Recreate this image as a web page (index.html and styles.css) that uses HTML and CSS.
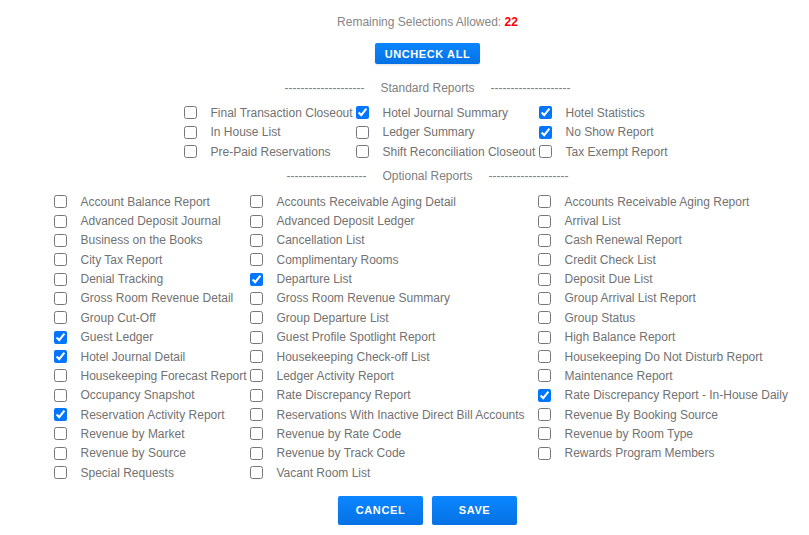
FILE: index.html
```html
<!DOCTYPE html>
<html lang="en">
<head>
    <meta charset="UTF-8">
    <meta name="viewport" content="width=device-width, initial-scale=1.0">
    <title>Report Selection</title>

    <link rel="stylesheet" href="styles.css">
</head>
<body>
    <div class="page">
        <p class="remaining">Remaining Selections Allowed: <b>22</b></p>

        <button type="button" class="btn btn-small">Uncheck All</button>

        <div class="section-title">
            <span>--------------------</span> <span>Standard Reports</span> <span>--------------------</span>
        </div>
        <div class="report-grid standard">
            <label class="item"><input type="checkbox"> Final Transaction Closeout</label>
            <label class="item"><input type="checkbox" checked> Hotel Journal Summary</label>
            <label class="item"><input type="checkbox" checked> Hotel Statistics</label>

            <label class="item"><input type="checkbox"> In House List</label>
            <label class="item"><input type="checkbox"> Ledger Summary</label>
            <label class="item"><input type="checkbox" checked> No Show Report</label>

            <label class="item"><input type="checkbox"> Pre-Paid Reservations</label>
            <label class="item"><input type="checkbox"> Shift Reconciliation Closeout</label>
            <label class="item"><input type="checkbox"> Tax Exempt Report</label>
        </div>

        <div class="section-title second">
            <span>--------------------</span> <span>Optional Reports</span> <span>--------------------</span>
        </div>
        <div class="report-grid optional">
            <label class="item"><input type="checkbox"> Account Balance Report</label>
            <label class="item"><input type="checkbox"> Accounts Receivable Aging Detail</label>
            <label class="item"><input type="checkbox"> Accounts Receivable Aging Report</label>

            <label class="item"><input type="checkbox"> Advanced Deposit Journal</label>
            <label class="item"><input type="checkbox"> Advanced Deposit Ledger</label>
            <label class="item"><input type="checkbox"> Arrival List</label>

            <label class="item"><input type="checkbox"> Business on the Books</label>
            <label class="item"><input type="checkbox"> Cancellation List</label>
            <label class="item"><input type="checkbox"> Cash Renewal Report</label>

            <label class="item"><input type="checkbox"> City Tax Report</label>
            <label class="item"><input type="checkbox"> Complimentary Rooms</label>
            <label class="item"><input type="checkbox"> Credit Check List</label>

            <label class="item"><input type="checkbox"> Denial Tracking</label>
            <label class="item"><input type="checkbox" checked> Departure List</label>
            <label class="item"><input type="checkbox"> Deposit Due List</label>

            <label class="item"><input type="checkbox"> Gross Room Revenue Detail</label>
            <label class="item"><input type="checkbox"> Gross Room Revenue Summary</label>
            <label class="item"><input type="checkbox"> Group Arrival List Report</label>

            <label class="item"><input type="checkbox"> Group Cut-Off</label>
            <label class="item"><input type="checkbox"> Group Departure List</label>
            <label class="item"><input type="checkbox"> Group Status</label>

            <label class="item"><input type="checkbox" checked> Guest Ledger</label>
            <label class="item"><input type="checkbox"> Guest Profile Spotlight Report</label>
            <label class="item"><input type="checkbox"> High Balance Report</label>

            <label class="item"><input type="checkbox" checked> Hotel Journal Detail</label>
            <label class="item"><input type="checkbox"> Housekeeping Check-off List</label>
            <label class="item"><input type="checkbox"> Housekeeping Do Not Disturb Report</label>

            <label class="item"><input type="checkbox"> Housekeeping Forecast Report</label>
            <label class="item"><input type="checkbox"> Ledger Activity Report</label>
            <label class="item"><input type="checkbox"> Maintenance Report</label>

            <label class="item"><input type="checkbox"> Occupancy Snapshot</label>
            <label class="item"><input type="checkbox"> Rate Discrepancy Report</label>
            <label class="item"><input type="checkbox" checked> Rate Discrepancy Report - In-House Daily</label>

            <label class="item"><input type="checkbox" checked> Reservation Activity Report</label>
            <label class="item"><input type="checkbox"> Reservations With Inactive Direct Bill Accounts</label>
            <label class="item"><input type="checkbox"> Revenue By Booking Source</label>

            <label class="item"><input type="checkbox"> Revenue by Market</label>
            <label class="item"><input type="checkbox"> Revenue by Rate Code</label>
            <label class="item"><input type="checkbox"> Revenue by Room Type</label>

            <label class="item"><input type="checkbox"> Revenue by Source</label>
            <label class="item"><input type="checkbox"> Revenue by Track Code</label>
            <label class="item"><input type="checkbox"> Rewards Program Members</label>

            <label class="item"><input type="checkbox"> Special Requests</label>
            <label class="item"><input type="checkbox"> Vacant Room List</label>
        </div>

        <div class="actions">
            <button type="button" class="btn btn-big">Cancel</button>
            <button type="button" class="btn btn-big">Save</button>
        </div>
    </div>
</body>
</html>
```

FILE: styles.css
```css
:root{
    --cor-texto: #727272;
    --cor-titulo: #808080;
    --cor-botao: #0a7df0;
}

html, body{
    margin: 0;
    overflow: hidden;
    background-color: #ffffff;
}

body{
    font-family: "Liberation Sans", Arial, sans-serif;
    font-size: 12px;
    color: var(--cor-texto);
}

.page{
    padding-top: 15px;
    padding-left: 46px;
    display: flex;
    flex-direction: column;
    align-items: center;
}

.remaining{
    margin: 0;
    line-height: 14px;
    color: #868686;
}

.remaining b{
    color: #ff0000;
}

.btn{
    font-family: "Liberation Sans", Arial, sans-serif;
    font-weight: bold;
    font-size: 11px;
    text-transform: uppercase;
    letter-spacing: 0.6px;
    color: #ffffff;
    border: none;
    border-radius: 2px;
    background: linear-gradient(#0b86ff, #0572e4);
    box-shadow: 0 1px 2px rgba(0, 0, 0, 0.12);
    cursor: pointer;
    padding: 0;
}

.btn-small{
    margin-top: 14px;
    height: 21px;
    padding: 0 10px;
}

.section-title{
    margin-top: 17px;
    line-height: 14px;
    display: flex;
    gap: 16px;
    color: var(--cor-titulo);
}

.section-title.second{
    margin-top: 7.5px;
}

.report-grid{
    display: grid;
    margin-top: 8px;
}

.standard{
    grid-template-columns: 172px 183px 133px;
    grid-auto-rows: 19.5px;
}

.optional{
    margin-top: 9px;
    grid-template-columns: 196px 288px 264px;
    grid-auto-rows: 19.36px;
}

.item{
    display: flex;
    align-items: center;
    gap: 14px;
    white-space: nowrap;
    line-height: 14px;
}

.item input{
    margin: 0;
    width: 13px;
    height: 13px;
    flex: none;
}

.actions{
    margin-top: 13.5px;
    display: flex;
    gap: 9px;
}

.btn-big{
    width: 85px;
    height: 29px;
}
```
